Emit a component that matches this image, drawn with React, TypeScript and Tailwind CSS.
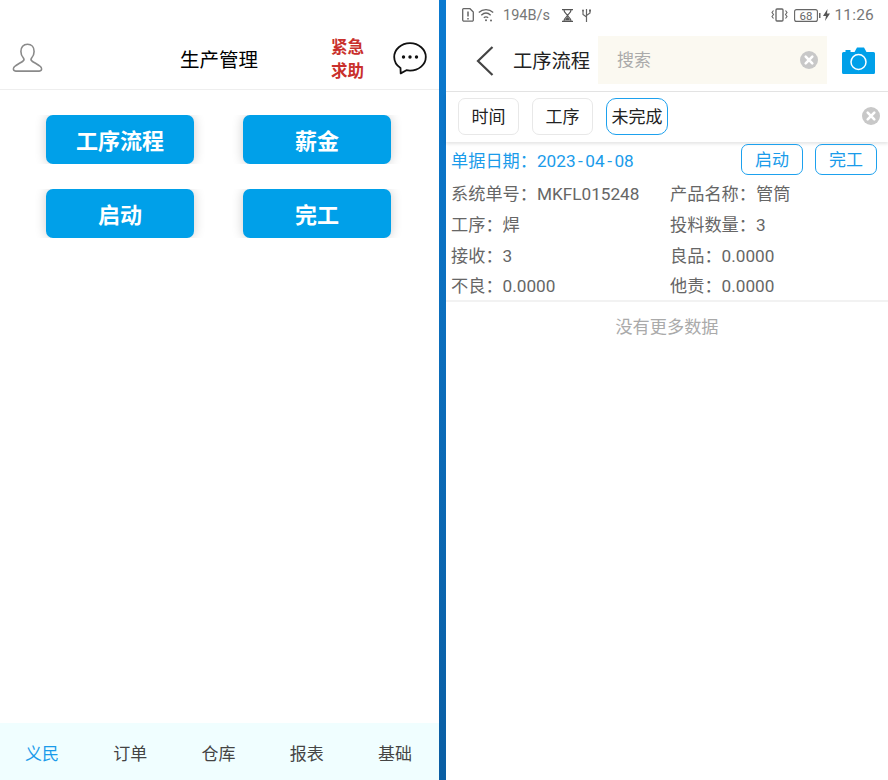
const font = { fontFamily: 'Roboto, "Noto Sans CJK SC", sans-serif' };

function UserIcon() {
  return (
    <svg width="31" height="30" viewBox="0 0 31 30" fill="none" stroke="#8a8a8a" strokeWidth="1.6" strokeLinejoin="round">
      <path d="M15.5 1.2c-4.2 0-6.6 3.2-6.6 7.2 0 2.8 1 5 2.5 6.6.7.9.7 2.2-.3 3-2 1.500-6.500 3.800-8.500 5.500-1.300 1.100-1.400 3-.8 3.800.4.6 1 .8 2 .8h23.400c1 0 1.600-.2 2-.8.6-.8.5-2.700-.8-3.800-2-1.700-6.500-4-8.500-5.500-1-.8-1-2.100-.3-3 1.500-1.600 2.500-3.800 2.500-6.600 0-4-2.400-7.200-6.600-7.200z" />
    </svg>
  );
}

function ChatIcon() {
  return (
    <svg width="34" height="33" viewBox="0 0 34 33" fill="none">
      <path d="M17 1.200C8.200 1.200 1.200 7.400 1.200 15c0 4.500 2.500 8.500 6.300 11l.2 5.400 5.700-3.200c1.200.3 2.400.4 3.600.4 8.800 0 15.800-6.100 15.800-13.600S25.800 1.200 17 1.200z" stroke="#111" strokeWidth="1.800" strokeLinejoin="round" />
      <circle cx="10.500" cy="15" r="1.700" fill="#111" />
      <circle cx="17" cy="15" r="1.700" fill="#111" />
      <circle cx="23.500" cy="15" r="1.700" fill="#111" />
    </svg>
  );
}

function ClearIcon() {
  return (
    <svg width="18" height="18" viewBox="0 0 18 18">
      <circle cx="9" cy="9" r="9" fill="#c8c8c8" />
      <path d="M5.700 5.700l6.600 6.600M12.300 5.700l-6.600 6.600" stroke="#fff" strokeWidth="2.600" strokeLinecap="round" />
    </svg>
  );
}

function CameraIcon() {
  return (
    <svg width="33" height="27" viewBox="0 0 33 27">
      <path d="M1.500 5h2V3h5v2h4l2.500-4.500h7L24.500 5h7A1.500 1.500 0 0 1 33 6.500v19a1.500 1.500 0 0 1-1.500 1.500h-30A1.500 1.500 0 0 1 0 25.500v-19A1.500 1.500 0 0 1 1.500 5z" fill="#00a0e9" />
      <circle cx="16.500" cy="15" r="7.500" fill="none" stroke="#fff" strokeWidth="1.500" />
    </svg>
  );
}

function StatusLeft() {
  return (
    <div className="flex items-center text-[#666]">
      <svg width="12" height="14" viewBox="0 0 12 14" fill="none" className="ml-[16px]">
        <path d="M1.500.7h6.500l3.300 3.300v8a1.200 1.200 0 0 1-1.200 1.200H1.500A1.200 1.200 0 0 1 .7 12V1.500A.8.800 0 0 1 1.500.7z" stroke="#666" strokeWidth="1.300" />
        <path d="M6 3.500v5M6 10v1.400" stroke="#666" strokeWidth="1.500" />
      </svg>
      <svg width="17" height="14" viewBox="0 0 17 14" fill="none" className="ml-[4px]" stroke="#666" strokeWidth="1.300">
        <path d="M.8 4.500C4.800.7 11.200.7 15.200 4.500M3.300 7.200c2.900-2.700 6.500-2.700 9.400 0M5.800 9.800c1.500-1.300 2.900-1.300 4.400 0" />
        <circle cx="8" cy="12.300" r="1" fill="#666" stroke="none" />
        <circle cx="13" cy="12.500" r="1" fill="#666" stroke="none" />
      </svg>
      <span className="ml-[8px] pt-[2px] text-[14.500px] leading-none text-[#777]">194B/s</span>
      <svg width="11" height="13" viewBox="0 0 11 13" className="ml-[12px]" fill="none" stroke="#555">
        <path d="M0 .7h11M0 12.300h11M2 1c0 3 2.500 3.500 3.500 5.500C6.500 4.500 9 4 9 1M2 12c0-3 2.500-3.500 3.500-5.500C6.500 8.500 9 9 9 12" strokeWidth="1.200" />
        <path d="M3 11.500c0-1.500 1.500-2.500 2.500-3.500 1 1 2.500 2 2.500 3.500z" fill="#555" stroke="none" />
      </svg>
      <svg width="11" height="14" viewBox="0 0 11 14" fill="none" stroke="#666" strokeWidth="1.200" className="ml-[8px]">
        <path d="M5.500 1v13M2 3v3.500l3.500 2.500M9 3v2l-3.500 2.500" />
        <circle cx="2" cy="2.500" r="1" fill="#666" stroke="none" />
        <rect x="8" y="1.500" width="2" height="2" fill="#666" stroke="none" />
      </svg>
    </div>
  );
}

function StatusRight() {
  return (
    <div className="flex items-center text-[#666]">
      <svg width="17" height="14" viewBox="0 0 17 14" fill="none" stroke="#666" strokeWidth="1.100">
        <rect x="5" y="1" width="7" height="12" rx="1" strokeWidth="1.300" />
        <path d="M2.500 2.500L1 4.500l1.500 2-1.500 2 1.500 2M14.500 2.500l1.500 2-1.500 2 1.500 2-1.500 2" />
      </svg>
      <svg width="27" height="13" viewBox="0 0 27 13" fill="none" className="ml-[6px]">
        <rect x=".6" y=".6" width="22.800" height="11.800" rx="2" stroke="#666" strokeWidth="1.100" />
        <rect x="25" y="4" width="1.500" height="5" fill="#666" />
        <text x="12" y="10.500" textAnchor="middle" fontSize="11.500" fill="#666" fontFamily="Roboto, sans-serif">68</text>
      </svg>
      <svg width="7" height="12" viewBox="0 0 7 12" className="ml-[2px]" fill="#555">
        <path d="M4.500 0L0 7h3l-1 5 5-7.500H4z" />
      </svg>
      <span className="ml-[4px] pt-[2px] text-[15.500px] leading-none tracking-[0.2px] text-[#777]">11:26</span>
    </div>
  );
}

function MenuButton({ label }: { label: string }) {
  return (
    <div className="overflow-hidden px-[12px]">
      <button className="flex h-[49px] w-[148px] items-center justify-center rounded-[7px] bg-[#00a0e9] pt-[4px] text-[22px] font-bold text-white shadow-[0_0_12px_rgba(0,0,0,0.2)]">
        {label}
      </button>
    </div>
  );
}

function Chip({ label, active }: { label: string; active?: boolean }) {
  return (
    <div
      className={
        "flex h-[37px] items-center justify-center border bg-white pt-[4px] text-[17px] text-[#222] " +
        (active ? "w-[62px] rounded-[10px] border-[#1da1ee]" : "w-[61px] rounded-[7px] border-[#e8e8e8]")
      }
    >
      {label}
    </div>
  );
}

function OutlineButton({ label }: { label: string }) {
  return (
    <button className="flex h-[31px] w-[62px] items-center justify-center rounded-[7px] border border-[#1da1ee] pt-[2px] text-[17px] text-[#1a9bea]">
      {label}
    </button>
  );
}

const colon = "\uFF1A";

const rows: string[] = [
  "系统单号" + colon + "MKFL015248",
  "产品名称" + colon + "管筒",
  "工序" + colon + "焊",
  "投料数量" + colon + "3",
  "接收" + colon + "3",
  "良品" + colon + "0.0000",
  "不良" + colon + "0.0000",
  "他责" + colon + "0.0000",
];

const tabs = ["义民", "订单", "仓库", "报表", "基础"];

export default function App() {
  return (
    <div className="flex h-[780px] w-[888px] overflow-hidden bg-white" style={font}>
      <div className="flex w-[439px] flex-col">
        <header className="flex h-[90px] shrink-0 items-start border-b border-[#eeeeee] pt-[36px]">
          <div className="ml-[12px] mt-[7px]"><UserIcon /></div>
          <div className="ml-[137px] mt-[10px] w-[78px] text-[19.500px] leading-[29px] text-black">生产管理</div>
          <div className="ml-[73px] w-[34px] text-[16.500px] font-bold leading-[24px] text-[#c9302c]">紧急求助</div>
          <div className="ml-[28px] mt-[6px]"><ChatIcon /></div>
        </header>
        <main className="flex-1 pt-[25px]">
          <div className="ml-[34px] grid w-[369px] grid-cols-2 gap-x-[25px] gap-y-[25px]">
            <MenuButton label="工序流程" />
            <MenuButton label="薪金" />
            <MenuButton label="启动" />
            <MenuButton label="完工" />
          </div>
        </main>
        <nav className="flex h-[57px] shrink-0 items-center justify-between bg-[#f0feff] pl-[25px] pr-[27px] pt-[7px] text-[17px]">
          {tabs.map((t, i) => (
            <span key={t} className={i === 0 ? "text-[#1a9bea]" : "text-[#444]"}>{t}</span>
          ))}
        </nav>
      </div>

      <div className="w-[7px] shrink-0 bg-gradient-to-b from-[#0b7ad0] to-[#0a5ea3]" />

      <div className="flex min-w-0 flex-1 flex-col">
        <div className="flex h-[30px] shrink-0 items-center justify-between pr-[14px]">
          <StatusLeft />
          <StatusRight />
        </div>
        <div className="flex h-[62px] shrink-0 items-start border-b border-[#e4e4e4] pt-[6px]">
          <svg width="18" height="30" viewBox="0 0 18 30" fill="none" className="ml-[30px] mt-[10px]">
            <path d="M16.500 1L2 15l14.500 14" stroke="#444" strokeWidth="2.200" />
          </svg>
          <div className="ml-[19px] mt-[11px] w-[78px] text-[19.300px] leading-[30px] text-[#222]">工序流程</div>
          <div className="ml-[7px] flex h-[48px] w-[229px] items-center justify-between bg-[#fbf9f1] pl-[19px] pr-[9px]">
            <span className="pt-[2px] text-[17px] text-[#aaaaaa]">搜索</span>
            <ClearIcon />
          </div>
          <div className="ml-[15px] mt-[11px]"><CameraIcon /></div>
        </div>
        <div className="flex h-[50px] shrink-0 items-center gap-[13px] pb-[2px] pl-[12px] pr-[8px] shadow-[0_2px_3px_rgba(0,0,0,0.1)]">
          <Chip label="时间" />
          <Chip label="工序" />
          <Chip label="未完成" active />
          <div className="ml-auto"><ClearIcon /></div>
        </div>
        <div className="h-[160px] shrink-0 border-b-2 border-[#f2f2f2] pl-[5px] pr-[11px] pt-[2px] text-[17.200px] text-[#666]">
          <div className="flex h-[31px] items-center justify-between">
            <span className="whitespace-nowrap pt-[4px] text-[#1a9bea]">
              {"单据日期" + colon}2023<span className="px-[2.500px]">-</span>04<span className="px-[2.500px]">-</span>08
            </span>
            <div className="flex gap-[12px]">
              <OutlineButton label="启动" />
              <OutlineButton label="完工" />
            </div>
          </div>
          <div className="mt-[5px] grid auto-rows-[30.600px] grid-cols-[219px_1fr] items-center">
            {rows.map((r) => (
              <div key={r} className="whitespace-nowrap">{r}</div>
            ))}
          </div>
        </div>
        <div className="pt-[13px] text-center text-[17.200px] text-[#aaaaaa]">没有更多数据</div>
      </div>
    </div>
  );
}
